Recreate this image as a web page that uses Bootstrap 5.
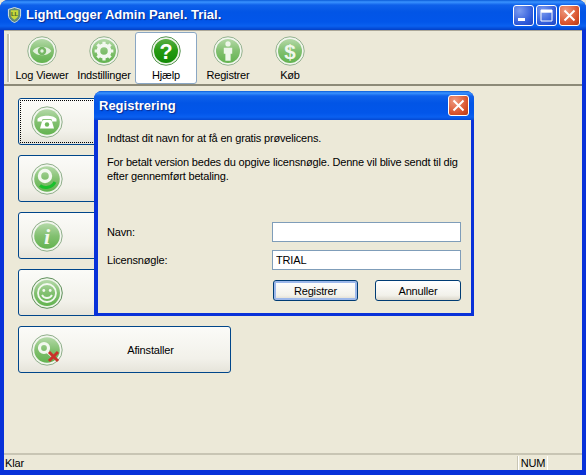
<!DOCTYPE html>
<html lang="da">
<head>
<meta charset="UTF-8">
<title>LightLogger Admin Panel. Trial.</title>
<link href="https://cdn.jsdelivr.net/npm/bootstrap@5.3.3/dist/css/bootstrap.min.css" rel="stylesheet">
<style>
html, body { height: 100%; margin: 0; overflow: hidden; }
body { font-family: "Liberation Sans", Arial, sans-serif; font-size: 11px; letter-spacing: -.17px; line-height: 14px; color: #000; background: #ece9d8; }
.xp-window { position: relative; height: 475px; width: 586px; background: #0831d9; border-radius: 8px 8px 0 0; overflow: hidden; }
.xp-title { height: 30px; padding: 0 6px 0 7px; background: linear-gradient(180deg, #0a5bd8 0, #3a93ff 2px, #0f61ea 5px, #0255e6 12px, #0256ea 22px, #0a60f0 26px, #0240c8 30px); }
.xp-caption { font-family: "Liberation Sans", sans-serif; font-weight: 700; font-size: 13px; letter-spacing: 0; color: #fff; text-shadow: 1px 1px 1px #0a2a90; }
.xp-ctl { width: 21px; height: 21px; border: 1px solid #fff; border-radius: 3px; padding: 0; background: radial-gradient(circle at 30% 25%, #7c9cf0, #2b57d8 70%, #2246c0); }
.xp-ctl.closer { background: radial-gradient(circle at 30% 25%, #ef9a80, #d9532c 65%, #b53a12); }
.xp-ctl-row { column-gap: 2px; }
.xp-frame { margin: 0 4px 5px; background: #ece9d8; }
.xp-bar { height: 56px; border-top: 1px solid #aca899; border-bottom: 2px solid #8c8a78; padding: 1px 0 0 7px; background: #ece9d8; }
.xp-grip { width: 2px; height: 48px; margin: 2px 1px 0 -4px; background: #c4c1ae; border-right: 1px solid #fff; box-sizing: content-box; }
.xp-tool { width: 62px; height: 52px; padding-top: 3px; border: 1px solid transparent; border-radius: 3px; text-align: center; white-space: nowrap; }
.xp-tool.picked { background: #fff; border-color: #8aa7c4; }
.xp-tool svg { display: block; margin: 0 auto 2px; }
.xp-main { height: 367px; padding: 12px 0 0 14px; row-gap: 10px; }
.xp-big { width: 213px; height: 47px; padding: 0 0 0 12px; background: linear-gradient(180deg, #fbfbf8, #f2f1ea 70%, #e6e4da); border: 1px solid #00468a; border-radius: 3px; font-size: 11px; letter-spacing: -.17px; color: #000; }
.xp-big.focused { outline: 1px dotted #000; outline-offset: -3px; }
.xp-big-label { flex: 1; text-align: center; padding-left: 8px; }
.xp-status { height: 17px; border-top: 2px solid #c8c5b4; padding: 0 0 0 1px; }
.xp-num { width: 30px; margin-right: 34px; border-left: 1px solid #fff; border-right: 1px solid #fff; box-shadow: -1px 0 0 #c8c5b4; text-align: center; }
.xp-dialog { position: absolute; left: 94px; top: 91px; width: 380px; height: 225px; background: #0831d9; border-radius: 8px 8px 0 0; overflow: hidden; }
.xp-dialog .xp-title { height: 29px; padding: 0 5px; }
.xp-dlg-body { margin: 0 3px 3px 4px; height: 193px; padding: 11px 9px 0; background: #ece9d8; }
.xp-dlg-body p { margin: 0 0 10px; white-space: nowrap; }
.xp-form { margin-top: 39px; row-gap: 8px; }
.xp-field-label { width: 165px; }
.xp-field { width: 189px; height: 20px; padding: 1px 3px; font-size: 11px; line-height: 14px; letter-spacing: -.17px; border: 1px solid #7f9db9; border-radius: 0; color: #000; }
.xp-cmd { width: 86px; height: 21px; padding: 0; font-size: 11px; line-height: 14px; letter-spacing: -.17px; color: #000; background: linear-gradient(180deg, #fff, #f2f1ea 75%, #dcd8cc); border: 1px solid #003c74; border-radius: 3px; }
.xp-cmd.primary { width: 85px; box-shadow: inset 0 0 0 2px #9db8ea; }
.xp-actions { margin: 10px 0 0 166px; column-gap: 17px; }
</style>
</head>
<body>
<svg width="0" height="0" class="d-block">
  <defs>
    <linearGradient id="soft" x1="0" y1="0" x2="0" y2="1"><stop offset="0" stop-color="#b4d9a8"/><stop offset=".5" stop-color="#82c070"/><stop offset="1" stop-color="#63b350"/></linearGradient>
    <linearGradient id="strong" x1="0" y1="0" x2="0" y2="1"><stop offset="0" stop-color="#58ad45"/><stop offset=".5" stop-color="#239a10"/><stop offset="1" stop-color="#128a05"/></linearGradient>
    <symbol id="disc" viewBox="0 0 32 32"><circle cx="16" cy="16" r="15.2" fill="#f2f6ee" stroke="#8fae8a"/><circle cx="16" cy="16" r="12.8" fill="url(#soft)"/></symbol>
    <symbol id="disc-strong" viewBox="0 0 32 32"><circle cx="16" cy="16" r="15.2" fill="#eef5ea" stroke="#4e8f48"/><circle cx="16" cy="16" r="12.8" fill="url(#strong)"/></symbol>
  </defs>
</svg>

<div class="xp-window d-flex flex-column">
  <div class="xp-title d-flex align-items-center flex-shrink-0">
    <svg width="15" height="18" viewBox="0 0 16 18" class="flex-shrink-0 me-1"><path d="M8 1 L14.5 3 V9 C14.5 13 11 16 8 17 C5 16 1.5 13 1.5 9 V3 Z" fill="#5f8a78" stroke="#dfe8e0"/><path d="M4 4 H12 V9 C12 11 10 13 8 14 C6 13 4 11 4 9 Z" fill="#c6d83a"/><text x="8" y="10" text-anchor="middle" font-family="Liberation Sans" font-size="6.5" font-weight="700" fill="#45602a">LL</text></svg>
    <span class="xp-caption flex-grow-1">LightLogger Admin Panel. Trial.</span>
    <div class="xp-ctl-row d-flex">
      <button class="xp-ctl d-flex justify-content-center" aria-label="Minimer"><svg width="19" height="19" viewBox="0 0 19 19"><rect x="4" y="12" width="7" height="3" fill="#fff"/></svg></button>
      <button class="xp-ctl d-flex justify-content-center" aria-label="Maksimer"><svg width="19" height="19" viewBox="0 0 19 19"><path d="M4 4 H15 V15 H4 Z M4.5 6 H14.5" fill="none" stroke="#fff" stroke-width="1"/><rect x="4" y="4" width="11" height="2.4" fill="#fff"/></svg></button>
      <button class="xp-ctl closer d-flex justify-content-center" aria-label="Luk"><svg width="19" height="19" viewBox="0 0 19 19"><path d="M4.5 4.5 L14.5 14.5 M14.5 4.5 L4.5 14.5" stroke="#fff" stroke-width="2"/></svg></button>
    </div>
  </div>

  <div class="xp-frame flex-grow-1 d-flex flex-column">
    <div class="xp-bar d-flex">
      <div class="xp-grip"></div>
      <div class="xp-tool">
        <svg width="30" height="30" viewBox="0 0 32 32"><use href="#disc"/><path d="M6 16 C10 10 22 10 26 16 C22 22 10 22 6 16 Z" fill="#e4f1df"/><circle cx="16" cy="16" r="4.5" fill="#76b865"/><circle cx="16" cy="16" r="1.8" fill="#e4f1df"/></svg>Log Viewer
      </div>
      <div class="xp-tool">
        <svg width="30" height="30" viewBox="0 0 32 32"><use href="#disc"/><circle cx="16" cy="16" r="6" fill="none" stroke="#f2f8ef" stroke-width="4"/><path d="M16 6 V10 M16 22 V26 M6 16 H10 M22 16 H26 M9 9 L12 12 M20 20 L23 23 M23 9 L20 12 M12 20 L9 23" stroke="#f2f8ef" stroke-width="3.4"/></svg>Indstillinger
      </div>
      <div class="xp-tool picked">
        <svg width="30" height="30" viewBox="0 0 32 32"><use href="#disc-strong"/><text x="16" y="24" text-anchor="middle" font-family="Liberation Sans" font-size="23" font-weight="700" fill="#fff">?</text></svg>Hjælp
      </div>
      <div class="xp-tool">
        <svg width="30" height="30" viewBox="0 0 32 32"><use href="#disc"/><circle cx="16" cy="8.5" r="2.8" fill="#eef6ea"/><path d="M11.5 12.5 H20.5 V19 H18.8 V26.5 H13.2 V19 H11.5 Z" fill="#eef6ea"/></svg>Registrer
      </div>
      <div class="xp-tool">
        <svg width="30" height="30" viewBox="0 0 32 32"><use href="#disc"/><text x="16" y="24" text-anchor="middle" font-family="Liberation Sans" font-size="22" font-weight="700" fill="#f0f7ec">$</text></svg>Køb
      </div>
    </div>

    <div class="xp-main d-flex flex-column">
      <button class="xp-big focused d-flex align-items-center"><svg width="32" height="32" viewBox="0 0 32 32"><use href="#disc"/><path d="M6.5 13 C9 8.5 23 8.5 25.5 13 L25.5 15.5 L21 15.5 L20.5 13 H11.5 L11 15.5 L6.5 15.5 Z" fill="#fff"/><path d="M11 15.5 L12.5 14 H19.5 L21 15.5 L23 22.5 H9 Z" fill="#fff"/><circle cx="16" cy="18.5" r="2.2" fill="#6fb85d"/></svg></button>
      <button class="xp-big d-flex align-items-center"><svg width="32" height="32" viewBox="0 0 32 32"><use href="#disc"/><circle cx="14" cy="13" r="5.5" fill="none" stroke="#f2f8ef" stroke-width="3.4"/><path d="M9 22.5 C13 26 21 25 24 19" fill="none" stroke="#19c02c" stroke-width="3"/></svg></button>
      <button class="xp-big d-flex align-items-center"><svg width="32" height="32" viewBox="0 0 32 32"><use href="#disc"/><text x="16" y="24" text-anchor="middle" font-family="Liberation Serif" font-size="22" font-style="italic" font-weight="700" fill="#f2f8ef">i</text></svg></button>
      <button class="xp-big d-flex align-items-center"><svg width="32" height="32" viewBox="0 0 32 32"><circle cx="16" cy="16" r="15.3" fill="#eef5ea" stroke="#5f8f5a"/><circle cx="16" cy="16" r="13" fill="url(#soft)"/><circle cx="16" cy="16" r="9" fill="none" stroke="#f2f8ef" stroke-width="1.8"/><circle cx="12.8" cy="13.5" r="1.4" fill="#f2f8ef"/><circle cx="19.2" cy="13.5" r="1.4" fill="#f2f8ef"/><path d="M11 18 C13 22 19 22 21 18" fill="none" stroke="#f2f8ef" stroke-width="1.8"/></svg></button>
      <button class="xp-big d-flex align-items-center"><svg width="32" height="32" viewBox="0 0 32 32"><use href="#disc"/><circle cx="13" cy="14" r="4.5" fill="none" stroke="#f2f8ef" stroke-width="3.2"/><path d="M16.5 18 L21 22" stroke="#f2f8ef" stroke-width="3"/><path d="M18 18 L27 27 M27 18 L18 27" stroke="#c8332a" stroke-width="3"/></svg><span class="xp-big-label">Afinstaller</span></button>
    </div>

    <div class="xp-status d-flex align-items-center justify-content-between">
      <span>Klar</span>
      <span class="xp-num">NUM</span>
    </div>
  </div>

  <div class="xp-dialog d-flex flex-column">
    <div class="xp-title d-flex align-items-center justify-content-between flex-shrink-0">
      <span class="xp-caption">Registrering</span>
      <button class="xp-ctl closer d-flex justify-content-center" aria-label="Luk"><svg width="19" height="19" viewBox="0 0 19 19"><path d="M4.5 4.5 L14.5 14.5 M14.5 4.5 L4.5 14.5" stroke="#fff" stroke-width="2"/></svg></button>
    </div>
    <div class="xp-dlg-body">
      <p>Indtast dit navn for at få en gratis prøvelicens.</p>
      <p>For betalt version bedes du opgive licensnøgle. Denne vil blive sendt til dig<br>efter gennemført betaling.</p>
      <div class="xp-form d-flex flex-column">
        <div class="d-flex align-items-center"><label class="xp-field-label" for="navn">Navn:</label><input id="navn" class="xp-field form-control" type="text"></div>
        <div class="d-flex align-items-center"><label class="xp-field-label" for="noegle">Licensnøgle:</label><input id="noegle" class="xp-field form-control" type="text" value="TRIAL"></div>
      </div>
      <div class="xp-actions d-flex">
        <button class="xp-cmd primary">Registrer</button>
        <button class="xp-cmd">Annuller</button>
      </div>
    </div>
  </div>
</div>
<script src="https://cdn.jsdelivr.net/npm/bootstrap@5.3.3/dist/js/bootstrap.bundle.min.js"></script>
</body>
</html>
